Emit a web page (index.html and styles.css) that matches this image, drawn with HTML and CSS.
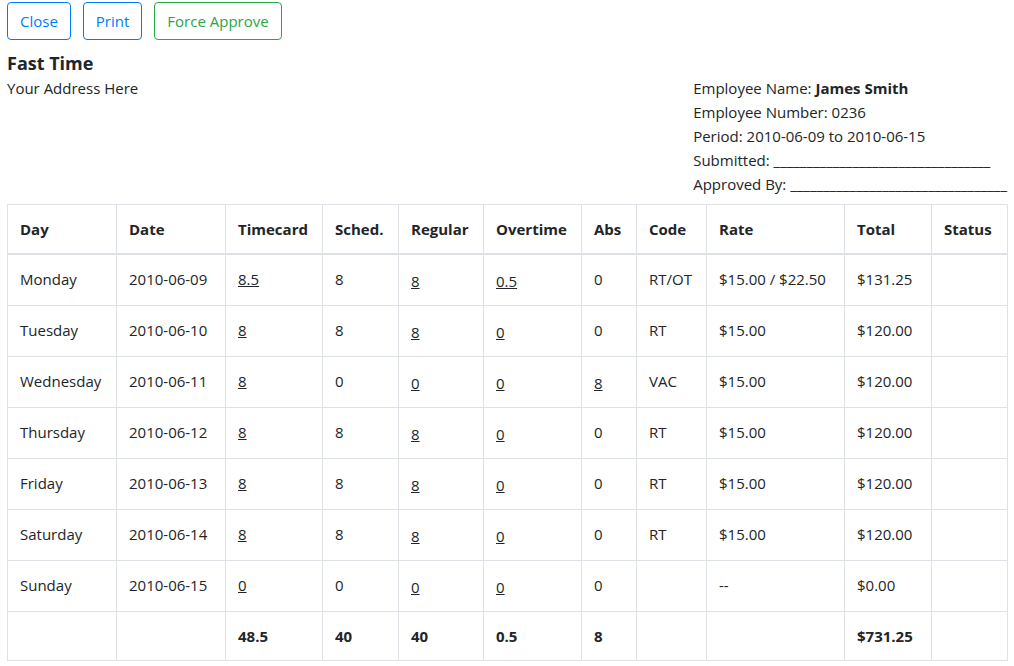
FILE: index.html
```html
<!DOCTYPE html>
<html lang="en">
<head>
<meta charset="utf-8">
<title>Fast Time - Timesheet</title>
<link rel="stylesheet" href="styles.css">
</head>
<body>
<div class="toolbar">
  <button class="btn btn-primary">Close</button>
  <button class="btn btn-primary">Print</button>
  <button class="btn btn-success">Force Approve</button>
</div>
<div class="company">Fast Time</div>
<div class="info-row">
  <div class="address">Your Address Here</div>
  <div class="employee">
    <div>Employee Name: <b>James Smith</b></div>
    <div>Employee Number: 0236</div>
    <div>Period: 2010-06-09 to 2010-06-15</div>
    <div>Submitted: _________________________________</div>
    <div>Approved By: _________________________________</div>
  </div>
</div>
<table class="sheet">
  <colgroup>
    <col class="c-day"><col class="c-date"><col class="c-tc"><col class="c-sched"><col class="c-reg"><col class="c-ot"><col class="c-abs"><col class="c-code"><col class="c-rate"><col class="c-total"><col class="c-status">
  </colgroup>
  <thead>
    <tr><th>Day</th><th>Date</th><th>Timecard</th><th>Sched.</th><th>Regular</th><th>Overtime</th><th>Abs</th><th>Code</th><th>Rate</th><th>Total</th><th>Status</th></tr>
  </thead>
  <tbody>
    <tr><td>Monday</td><td>2010-06-09</td><td><a href="#">8.5</a></td><td>8</td><td><a class="adj" href="#">8</a></td><td><a class="adj" href="#">0.5</a></td><td>0</td><td>RT/OT</td><td>$15.00 / $22.50</td><td>$131.25</td><td></td></tr>
    <tr><td>Tuesday</td><td>2010-06-10</td><td><a href="#">8</a></td><td>8</td><td><a class="adj" href="#">8</a></td><td><a class="adj" href="#">0</a></td><td>0</td><td>RT</td><td>$15.00</td><td>$120.00</td><td></td></tr>
    <tr><td>Wednesday</td><td>2010-06-11</td><td><a href="#">8</a></td><td>0</td><td><a class="adj" href="#">0</a></td><td><a class="adj" href="#">0</a></td><td><a class="adj" href="#">8</a></td><td>VAC</td><td>$15.00</td><td>$120.00</td><td></td></tr>
    <tr><td>Thursday</td><td>2010-06-12</td><td><a href="#">8</a></td><td>8</td><td><a class="adj" href="#">8</a></td><td><a class="adj" href="#">0</a></td><td>0</td><td>RT</td><td>$15.00</td><td>$120.00</td><td></td></tr>
    <tr><td>Friday</td><td>2010-06-13</td><td><a href="#">8</a></td><td>8</td><td><a class="adj" href="#">8</a></td><td><a class="adj" href="#">0</a></td><td>0</td><td>RT</td><td>$15.00</td><td>$120.00</td><td></td></tr>
    <tr><td>Saturday</td><td>2010-06-14</td><td><a href="#">8</a></td><td>8</td><td><a class="adj" href="#">8</a></td><td><a class="adj" href="#">0</a></td><td>0</td><td>RT</td><td>$15.00</td><td>$120.00</td><td></td></tr>
    <tr><td>Sunday</td><td>2010-06-15</td><td><a href="#">0</a></td><td>0</td><td><a class="adj" href="#">0</a></td><td><a class="adj" href="#">0</a></td><td>0</td><td></td><td>--</td><td>$0.00</td><td></td></tr>
    <tr class="totals"><td></td><td></td><td>48.5</td><td>40</td><td>40</td><td>0.5</td><td>8</td><td></td><td></td><td>$731.25</td><td></td></tr>
  </tbody>
</table>
</body>
</html>
```
FILE: styles.css
```css
html, body {
  margin: 0;
  padding: 0;
  background: #fff;
}
body {
  padding: 2px 7px 0 7px;
  font-family: "Open Sans", "Noto Sans", sans-serif;
  font-size: 15px;
  line-height: 24px;
  color: #212529;
}
.toolbar {
  display: flex;
  gap: 12px;
  height: 38px;
}
.btn {
  font-family: inherit;
  font-size: 15px;
  line-height: 24px;
  padding: 6px 12px;
  background: #fff;
  border: 1px solid;
  border-radius: 4px;
  cursor: pointer;
}
.btn-primary {
  color: #007bff;
  border-color: #007bff;
}
.btn-success {
  color: #28a745;
  border-color: #28a745;
}
.company {
  margin-top: 11px;
  font-size: 18px;
  font-weight: 700;
  line-height: 25px;
}
.info-row {
  display: flex;
  justify-content: space-between;
}
.employee b {
  font-weight: 700;
}
.sheet {
  margin-top: 8px;
  width: 1000px;
  border-collapse: collapse;
  table-layout: fixed;
}
.c-day { width: 109px; }
.c-date { width: 109px; }
.c-tc { width: 97px; }
.c-sched { width: 76px; }
.c-reg { width: 85px; }
.c-ot { width: 98px; }
.c-abs { width: 55px; }
.c-code { width: 70px; }
.c-rate { width: 138px; }
.c-total { width: 87px; }
.c-status { width: 76px; }
.sheet th, .sheet td {
  border: 1px solid #dee2e6;
  padding: 12px;
  text-align: left;
  vertical-align: top;
  white-space: nowrap;
}
.sheet th {
  font-weight: 700;
  vertical-align: bottom;
  border-bottom: 2px solid #dee2e6;
}
.sheet a {
  color: #212529;
  text-decoration: underline;
}
.sheet a.adj {
  display: inline-block;
  margin-top: 2px;
}
.totals td {
  font-weight: 700;
}
```
